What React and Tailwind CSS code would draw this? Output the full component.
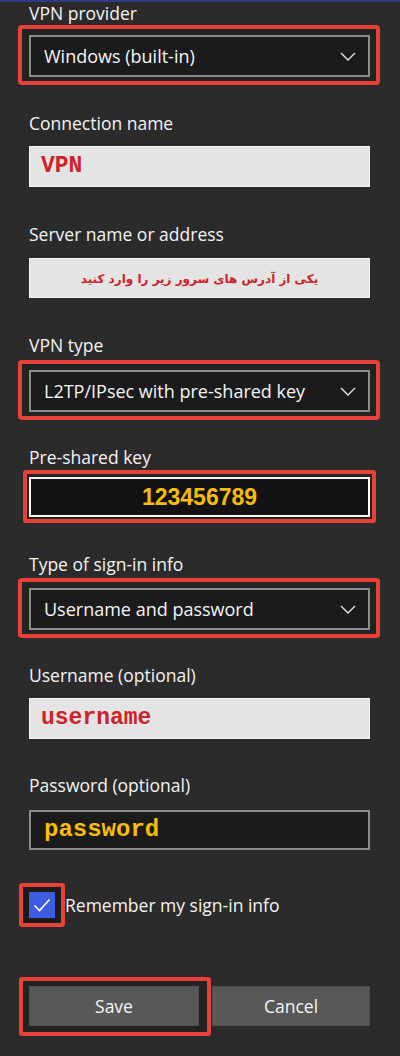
import React from 'react'

const Label = ({ children, className = '' }) => (
  <div className={`text-[17.5px] leading-[23px] text-[#f4f4f4] ${className}`}>{children}</div>
)

const Chevron = () => (
  <svg width="16" height="9" viewBox="0 0 16 9" fill="none">
    <path d="M1 1l7 7 7-7" stroke="#e6e6e6" strokeWidth="1.4" />
  </svg>
)

const Combo = ({ value, className = '' }) => (
  <div
    className={`-ml-[11px] -mr-[10px] rounded-[4px] border-4 border-[#e8413a] bg-[#232323] pb-[4px] pl-[7px] pr-[6px] pt-[6px] ${className}`}
  >
    <div className="flex h-[42px] items-center justify-between border-2 border-[#8c8c8c] bg-[#1b1b1b] pl-[13px] pr-[12px]">
      <span className="text-[18px] text-[#f5f5f5]">{value}</span>
      <Chevron />
    </div>
  </div>
)

export default function App() {
  return (
    <div className="min-h-[1056px] bg-[#2b2b2b] font-['Open_Sans',sans-serif]">
      <div className="h-[2px] bg-[#2f3b86]" />
      <div className="pl-[29px] pr-[30px]">
        <Label>VPN provider</Label>
        <Combo value="Windows (built-in)" />

        <Label className="mt-[27px]">Connection name</Label>
        <div className="mt-[11px] flex h-[41px] items-center border border-[#f4f4f4] bg-[#e4e4e4] pl-[11px]">
          <span className="font-['Liberation_Mono',monospace] text-[23px] font-bold text-[#cc2229]">VPN</span>
        </div>

        <Label className="mt-[36px]">Server name or address</Label>
        <div className="mt-[12px] flex h-[40px] items-center justify-center border border-[#f4f4f4] bg-[#e4e4e4] pt-[2px]">
          <span dir="rtl" className="font-['DejaVu_Sans',sans-serif] text-[12px] font-bold text-[#cc2229]">
            یکی از آدرس های سرور زیر را وارد کنید
          </span>
        </div>

        <Label className="mt-[36px]">VPN type</Label>
        <Combo value="L2TP/IPsec with pre-shared key" className="mt-[3px]" />

        <Label className="mt-[26px]">Pre-shared key</Label>
        <div className="-ml-[6px] -mr-[6px] mt-[1px] rounded-[3px] border-4 border-[#e8413a] bg-[#232323] px-[2px] pb-[2px] pt-[3px]">
          <div className="flex h-[40px] items-center justify-center border-2 border-white bg-[#121212]">
            <span className="font-['Liberation_Sans',sans-serif] text-[23px] font-bold text-[#f7bd0a]">123456789</span>
          </div>
        </div>

        <Label className="mt-[30px]">Type of sign-in info</Label>
        <Combo value="Username and password" className="mt-[2px]" />

        <Label className="mt-[26px]">Username (optional)</Label>
        <div className="mt-[11px] flex h-[41px] items-center border border-[#f4f4f4] bg-[#e4e4e4] pl-[11px]">
          <span className="font-['Liberation_Mono',monospace] text-[23px] font-bold text-[#cc2229]">username</span>
        </div>

        <Label className="mt-[35px]">Password (optional)</Label>
        <div className="mt-[13px] flex h-[40px] items-center border-2 border-[#8c8c8c] bg-[#1b1b1b] pl-[13px]">
          <span className="font-['Liberation_Mono',monospace] text-[24px] font-bold text-[#f7bd0a]">password</span>
        </div>

        <div className="mt-[33px] flex items-center">
          <div className="-ml-[10px] flex h-[44px] w-[46px] items-center justify-center rounded-[3px] border-4 border-[#e8413a] bg-[#1c1c1c]">
            <div className="flex h-[26px] w-[26px] items-center justify-center bg-[#3d5ce0]">
              <svg width="18" height="14" viewBox="0 0 18 14" fill="none">
                <path d="M1.5 7.5l5 5 10-11" stroke="#ffffff" strokeWidth="1.6" />
              </svg>
            </div>
          </div>
          <span className="text-[17.5px] text-[#f5f5f5]">Remember my sign-in info</span>
        </div>

        <div className="-ml-[10px] mt-[50px] flex items-start">
          <div className="rounded-[3px] border-4 border-[#e8413a] bg-[#232323] pb-[6px] pl-[6px] pr-[8px] pt-[5px]">
            <div className="flex h-[40px] w-[170px] items-center justify-center border border-[#4e4e4e] bg-[#585858] text-[17.5px] text-[#f5f5f5]">
              Save
            </div>
          </div>
          <div className="ml-[1px] mt-[9px] flex h-[40px] w-[158px] items-center justify-center border border-[#4e4e4e] bg-[#585858] text-[17.5px] text-[#f5f5f5]">
            Cancel
          </div>
        </div>
      </div>
    </div>
  )
}
